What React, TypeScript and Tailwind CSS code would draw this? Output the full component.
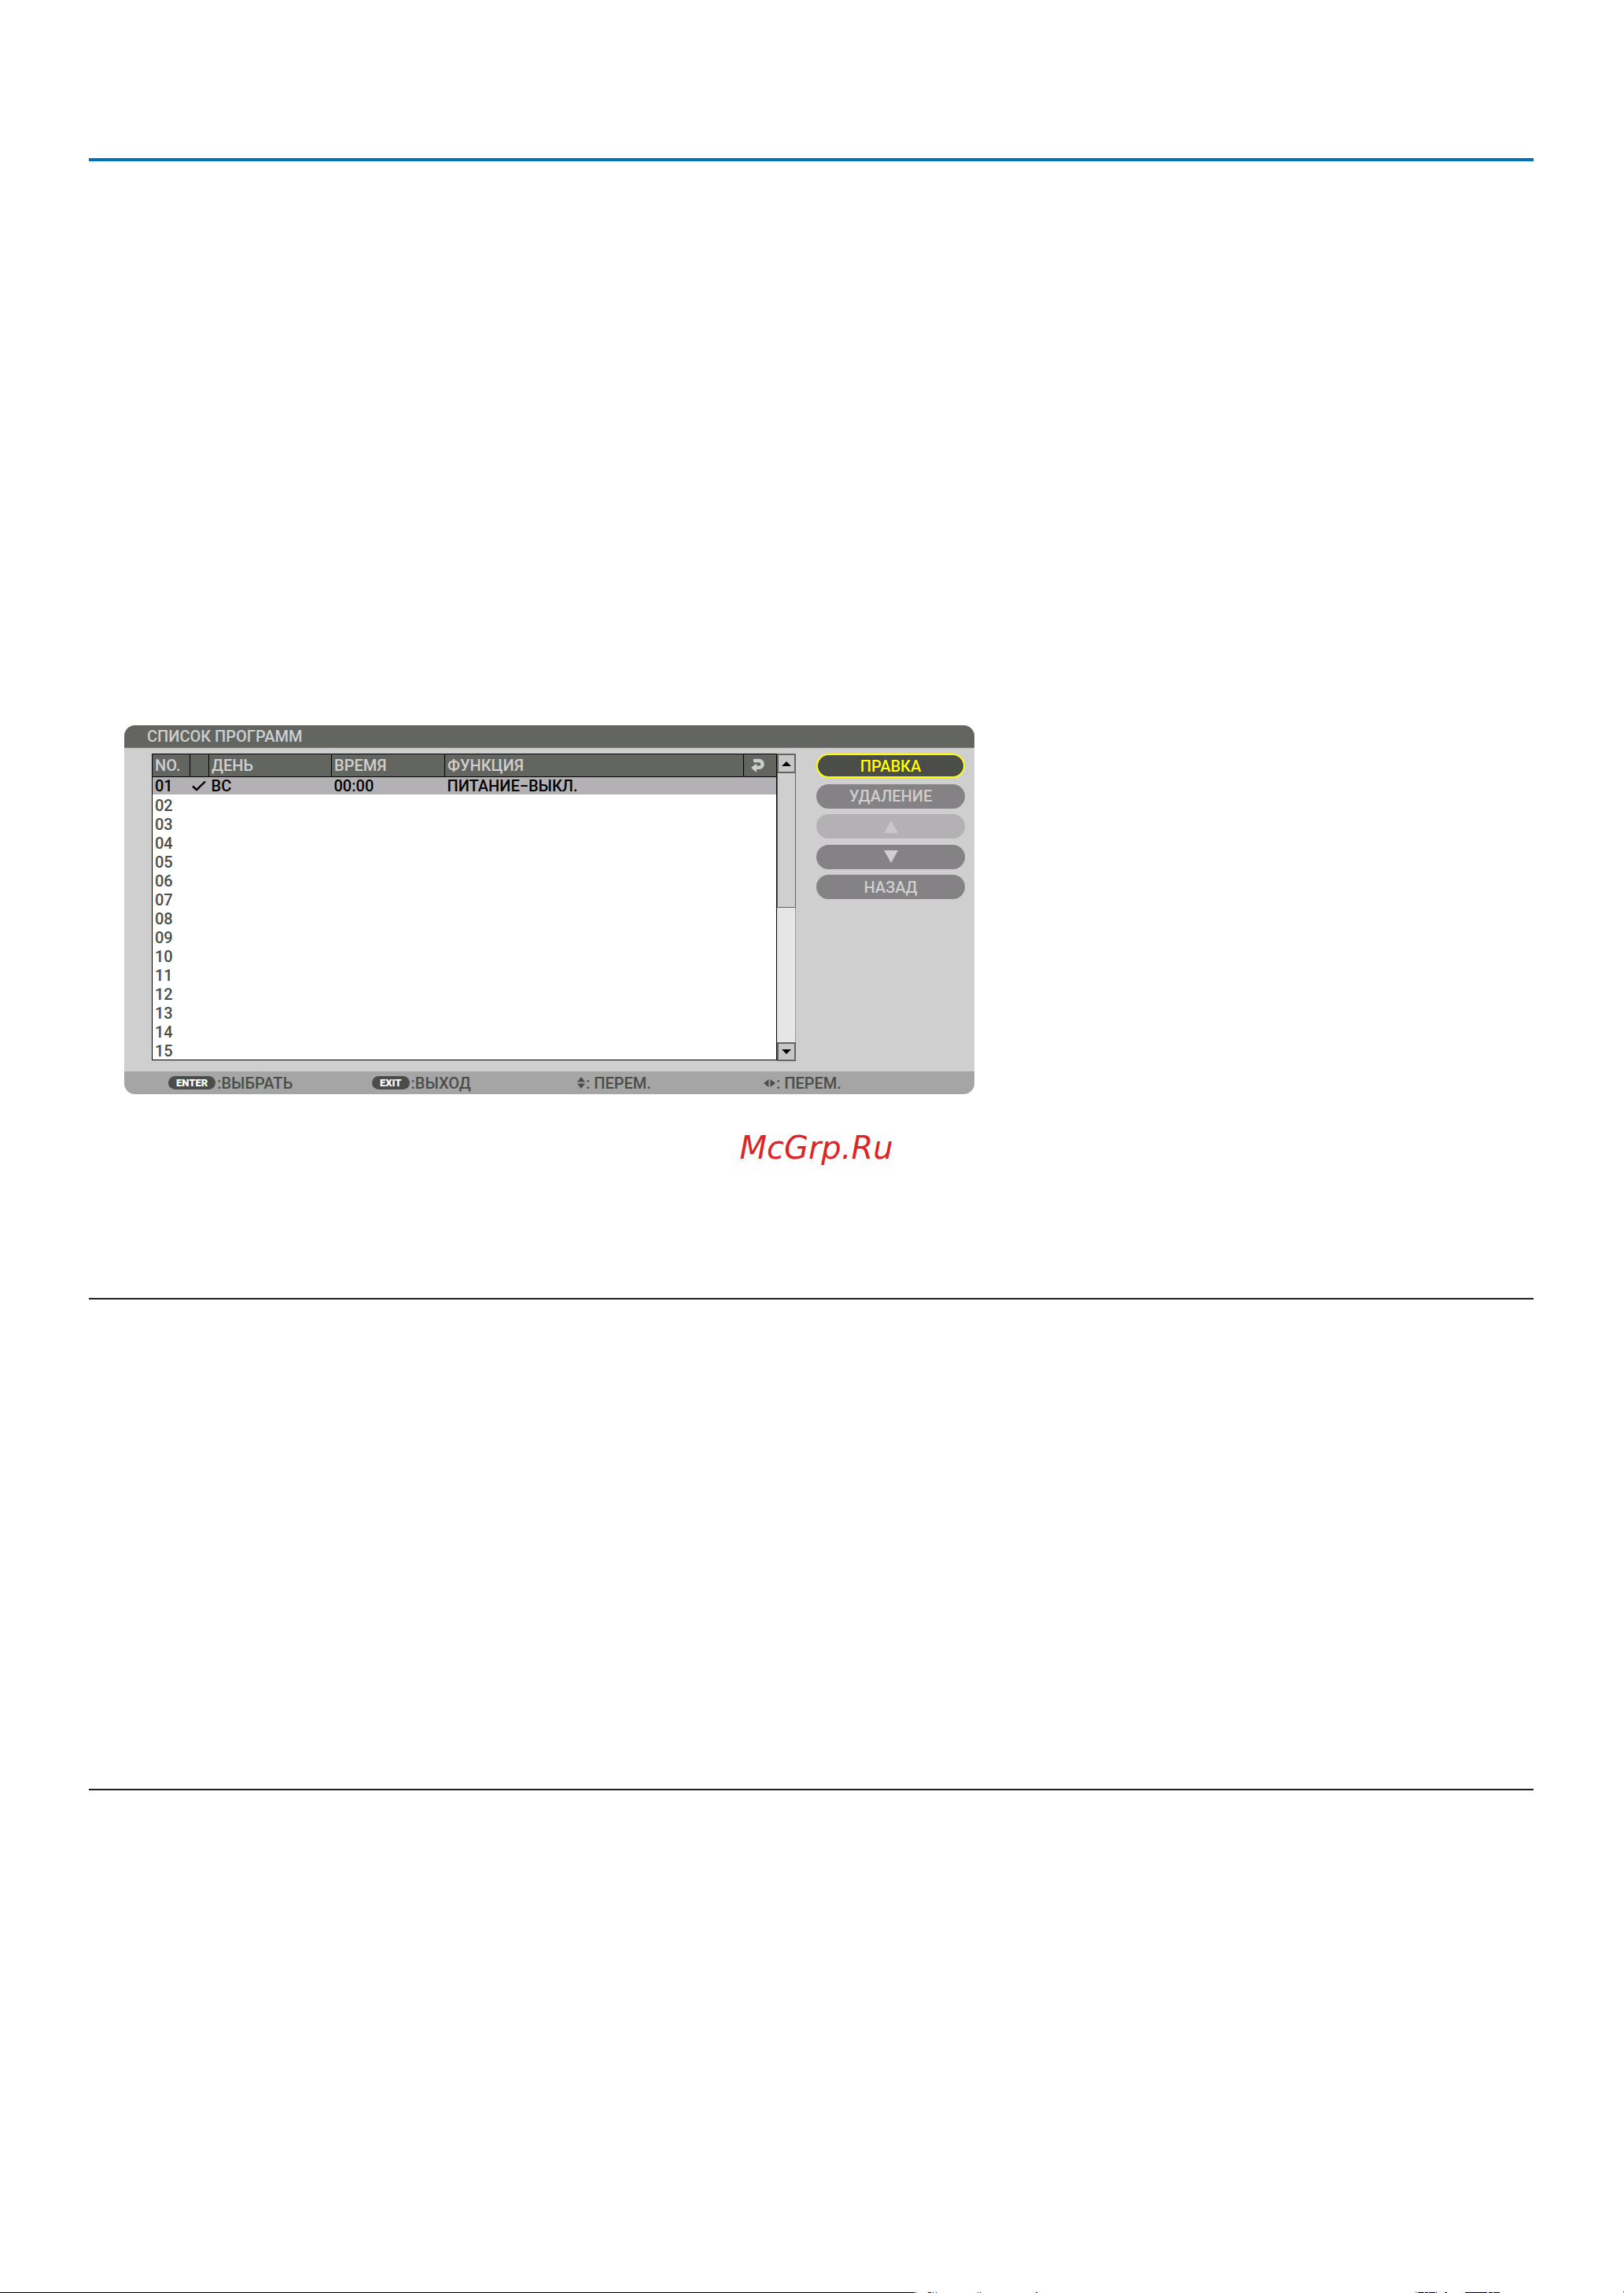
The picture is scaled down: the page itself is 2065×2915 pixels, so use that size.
import type { ReactNode } from 'react';

type Program = {
  no: string;
  enabled?: boolean;
  day?: string;
  time?: string;
  action?: string;
};

const FIRST: Program = { no: '01', enabled: true, day: 'ВС', time: '00:00', action: 'ПИТАНИЕ−ВЫКЛ.' };
const EMPTY = ['02', '03', '04', '05', '06', '07', '08', '09', '10', '11', '12', '13', '14', '15'];

function ReturnIcon() {
  return (
    <svg width="18" height="18" viewBox="0 0 18 18" className="block" aria-hidden="true">
      <path d="M3 3h7.200a4.400 4.400 0 0 1 0 8.800H5.500" fill="none" stroke="#cfcfcf" strokeWidth="4.400" />
      <path d="M0 12L7 6.500v11.500z" fill="#cfcfcf" />
    </svg>
  );
}

function ProgramTable() {
  return (
    <table className="w-[795px] table-fixed border-collapse border border-black bg-white text-left">
      <colgroup>
        <col className="w-[48px]" />
        <col className="w-[24px]" />
        <col className="w-[156px]" />
        <col className="w-[144px]" />
        <col />
        <col className="w-[42px]" />
      </colgroup>
      <thead>
        <tr className="h-[29px] bg-[#636561] text-[#cfcfcf]">
          <th className="border border-black p-0 pl-[3px] font-medium">NO.</th>
          <th className="border border-black p-0" />
          <th className="border border-black p-0 pl-[3px] font-medium">ДЕНЬ</th>
          <th className="border border-black p-0 pl-[3px] font-medium">ВРЕМЯ</th>
          <th className="border border-black p-0 pl-[3px] font-medium">ФУНКЦИЯ</th>
          <th className="border border-black p-0 pl-[9px]"><ReturnIcon /></th>
        </tr>
      </thead>
      <tbody>
        <tr className="h-[22px] bg-[#b4b1b4] text-black">
          <td className="p-0 pt-px pl-[3px]">{FIRST.no}</td>
          <td className="p-0 pl-[2px]">
            {FIRST.enabled && (
              <svg width="18" height="14" viewBox="0 0 18 14" className="block" aria-label="включено">
                <path d="M1 7.500l5 4.500L17 1.500" fill="none" stroke="#000" strokeWidth="2.400" />
              </svg>
            )}
          </td>
          <td className="p-0 pt-px pl-[3px]">{FIRST.day}</td>
          <td className="p-0 pt-px pl-[3px]">{FIRST.time}</td>
          <td className="p-0 pt-px pl-[3px]" colSpan={2}>{FIRST.action}</td>
        </tr>
        <tr className="h-[2px]"><td className="p-0" colSpan={6} /></tr>
        {EMPTY.map((no) => (
          <tr key={no} className="h-[24px] text-[#4b4d49]">
            <td className="p-0 pt-px pl-[3px]">{no}</td>
            <td className="p-0" colSpan={5} />
          </tr>
        ))}
      </tbody>
    </table>
  );
}

function ScrollBar() {
  return (
    <div className="flex w-[24px] flex-col border-r border-[#9a9a9a] bg-[#e6e6e6]">
      <button type="button" aria-label="Вверх" className="flex h-[25px] w-[24px] items-center justify-center border-2 border-[#636561] bg-[#c9c6c9]">
        <svg width="12" height="6" viewBox="0 0 12 6" aria-hidden="true"><path d="M6 0l6 6H0z" /></svg>
      </button>
      <div className="h-[171px] w-[24px] border-x border-b border-[#636561] bg-[#cfcfcf]" />
      <button type="button" aria-label="Вниз" className="mt-auto flex h-[24px] w-[24px] items-center justify-center border-2 border-[#636561] bg-[#c9c6c9]">
        <svg width="12" height="6" viewBox="0 0 12 6" aria-hidden="true"><path d="M0 0h12L6 6z" /></svg>
      </button>
    </div>
  );
}

const PILL = 'flex h-[31px] w-full items-center justify-center rounded-full font-medium';

function Actions() {
  return (
    <div className="flex h-[185px] w-[189px] flex-col justify-between">
      <button type="button" className={`${PILL} border-2 border-[#ffff00] bg-[#4b4d49] text-[#ffff00]`}>ПРАВКА</button>
      <button type="button" className={`${PILL} bg-[#848284] text-[#cfcfcf]`}>УДАЛЕНИЕ</button>
      <button type="button" disabled aria-label="Переместить вверх" className={`${PILL} bg-[#b4b1b4]`}>
        <svg width="18" height="16" viewBox="0 0 18 16" aria-hidden="true"><path d="M9 0l9 16H0z" fill="#c9c6c9" /></svg>
      </button>
      <button type="button" aria-label="Переместить вниз" className={`${PILL} bg-[#848284]`}>
        <svg width="18" height="16" viewBox="0 0 18 16" aria-hidden="true"><path d="M0 0h18L9 16z" fill="#cfcfcf" /></svg>
      </button>
      <button type="button" className={`${PILL} bg-[#848284] text-[#cfcfcf]`}>НАЗАД</button>
    </div>
  );
}

function Key({ children }: { children: ReactNode }) {
  return (
    <kbd className="flex h-[17px] items-center rounded-full bg-[#4b4d49] px-[10px] font-['Roboto'] text-[13px] font-black text-white">
      {children}
    </kbd>
  );
}

function Hints() {
  return (
    <div className="grid h-[29px] grid-cols-[259px_261px_237px_1fr] bg-[#a5a5a5] pl-[56px] text-[#4b4d49]">
      <div className="flex items-center"><Key>ENTER</Key><span className="pl-[2px]">:ВЫБРАТЬ</span></div>
      <div className="flex items-center"><Key>EXIT</Key><span className="pl-[2px]">:ВЫХОД</span></div>
      <div className="flex items-center">
        <svg width="10" height="15" viewBox="0 0 10 15" fill="#4b4d49" aria-hidden="true"><path d="M5 0l5 6.500H0zM0 8.500h10L5 15z" /></svg>
        <span className="pl-px">: ПЕРЕМ.</span>
      </div>
      <div className="flex items-center">
        <svg width="15" height="10" viewBox="0 0 15 10" fill="#4b4d49" aria-hidden="true"><path d="M0 5l6.500-5v10zM8.500 0l6.500 5-6.500 5z" /></svg>
        <span className="pl-px">: ПЕРЕМ.</span>
      </div>
    </div>
  );
}

// thin strip of broken pixels along the lower edge of the page
function EdgeStrip() {
  return (
    <svg width="2065" height="2" viewBox="0 0 2065 2" className="mt-auto block max-w-full" shapeRendering="crispEdges" aria-hidden="true">
      <path d="M0 1h1162v1H0zM1180 1h4v1h-4zM1243 1h1v1h-1zM1803 1h8v1h-8zM1812 1h4v1h-4zM1817 1h8v1h-8zM1838 1h2v1h-2zM1863 1h28v1h-28zM1893 1h5v1h-5zM1900 1h7v1h-7zM2064 0h1v1h-1z" />
      <path d="M1162 1h1v1h-1zM1186 1h1v1h-1zM1190 1h1v1h-1zM1246 1h1v1h-1zM1318 1h1v1h-1zM1810 1h1v1h-1zM1826 1h1v1h-1zM1874 1h1v1h-1zM1890 1h1v1h-1z" fill="#0000ff" />
      <path d="M1164 1h1v1h-1zM1180 1h1v1h-1zM1317 1h1v1h-1zM1800 1h1v1h-1zM1837 1h1v1h-1zM1870 1h1v1h-1zM1899 1h1v1h-1z" fill="#c00000" />
    </svg>
  );
}

export default function App() {
  return (
    <div className="flex min-h-screen flex-col bg-white">
      <main className="pr-[115px] pl-[113px] pt-[201px]">
        <hr className="h-1 border-0 bg-[#0072bc]" />

        <section className="mt-[717px] ml-[45px] w-full max-w-[1081px] overflow-hidden rounded-[14px] bg-[#cfcfcf] font-['Roboto',sans-serif] text-[20px] leading-[20px] font-medium">
          <h1 className="flex h-[29px] items-center border-b border-[#848284] bg-[#636561] pl-[29px] text-[#cfcfcf]">
            СПИСОК ПРОГРАММ
          </h1>
          <div className="flex h-[411px] items-start pt-[7px] pl-[35px]">
            <ProgramTable />
            <div className="flex h-[391px]"><ScrollBar /></div>
            <div className="ml-[26px]"><Actions /></div>
          </div>
          <Hints />
        </section>

        <p className="mt-[44px] ml-[13px] text-center font-['DejaVu_Sans',sans-serif] text-[40px] leading-[48px] text-[#dd2426] italic">
          McGrp.Ru
        </p>

        <hr className="mt-[167px] h-[2px] border-0 bg-[#231f20]" />
        <hr className="mt-[622px] h-[2px] border-0 bg-[#231f20]" />
      </main>
      <EdgeStrip />
    </div>
  );
}
